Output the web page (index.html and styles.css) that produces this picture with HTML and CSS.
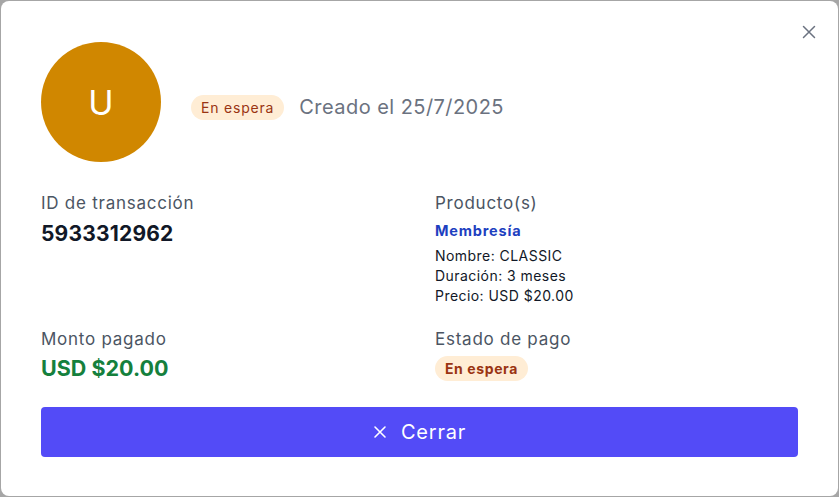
FILE: index.html
```html
<!DOCTYPE html>
<html lang="es">
<head>
<meta charset="utf-8">
<title>Transacción</title>
<link rel="stylesheet" href="styles.css">
</head>
<body>
<div class="modal">
  <button class="close" aria-label="Cerrar">
    <svg width="14" height="14" viewBox="0 0 14 14"><path d="M1.5 1.5L12.5 12.5M12.5 1.5L1.5 12.5" stroke="currentColor" stroke-width="1.5" stroke-linecap="round"/></svg>
  </button>
  <div class="header">
    <div class="avatar">U</div>
    <div class="meta">
      <span class="badge">En espera</span>
      <span class="created">Creado el 25/7/2025</span>
    </div>
  </div>
  <div class="grid">
    <div class="field">
      <div class="label">ID de transacción</div>
      <div class="value">5933312962</div>
    </div>
    <div class="field">
      <div class="label">Producto(s)</div>
      <div class="product-type">Membresía</div>
      <div class="detail">Nombre: CLASSIC</div>
      <div class="detail">Duración: 3 meses</div>
      <div class="detail">Precio: USD $20.00</div>
    </div>
    <div class="field">
      <div class="label">Monto pagado</div>
      <div class="value green">USD $20.00</div>
    </div>
    <div class="field">
      <div class="label">Estado de pago</div>
      <div class="badge bold">En espera</div>
    </div>
  </div>
  <button class="primary">
    <svg width="14" height="14" viewBox="0 0 14 14"><path d="M2 2L12 12M12 2L2 12" stroke="currentColor" stroke-width="1.6" stroke-linecap="round"/></svg>
    <span>Cerrar</span>
  </button>
</div>
</body>
</html>
```
FILE: styles.css
```css
* { box-sizing: border-box; }
html, body { margin: 0; padding: 0; }
body {
  width: 839px;
  height: 497px;
  background: #a6a6a6;
  padding: 1px;
  font-family: "Inter", "Noto Sans", sans-serif;
}
.modal {
  position: relative;
  background: #fff;
  width: 837px;
  height: 495px;
  border-radius: 8px;
  padding: 41px 40px 0 40px;
}
.close {
  position: absolute;
  top: 24px;
  right: 22px;
  background: none;
  border: 0;
  padding: 0;
  width: 14px;
  height: 14px;
  color: #6b7280;
  display: flex;
}
.header {
  display: flex;
  align-items: center;
}
.avatar {
  width: 120px;
  height: 120px;
  border-radius: 50%;
  background: #d08700;
  color: #fff;
  font-size: 34px;
  display: flex;
  align-items: center;
  justify-content: center;
  margin-right: 30px;
}
.meta {
  display: flex;
  align-items: center;
  margin-top: 10px;
}
.badge {
  display: inline-flex;
  align-items: center;
  height: 25px;
  padding: 0 10px;
  border-radius: 999px;
  background: #ffedd5;
  color: #9a3412;
  font-size: 14px;
  letter-spacing: 0.8px;
  margin-right: 15px;
}
.badge.bold {
  display: flex;
  width: max-content;
  font-weight: 700;
  margin-top: 4px;
  letter-spacing: 0.6px;
}
.created {
  font-size: 20px;
  letter-spacing: 0.45px;
  color: #6b7280;
}
.grid {
  display: grid;
  grid-template-columns: 1fr 1fr;
  column-gap: 31px;
  row-gap: 20px;
  margin-top: 28px;
}
.label {
  font-size: 17px;
  line-height: 26px;
  letter-spacing: 0.75px;
  color: #4b5563;
}
.value {
  margin-top: 2px;
  font-size: 21px;
  line-height: 32px;
  font-weight: 700;
  letter-spacing: 0.2px;
  color: #111827;
}
.value.green { color: #15803d; letter-spacing: 0; font-size: 21.5px; margin-top: 0; }
.product-type {
  margin-top: 4px;
  font-size: 14.5px;
  line-height: 22px;
  font-weight: 700;
  letter-spacing: 0.8px;
  color: #1d40c0;
  margin-bottom: 4px;
}
.detail {
  font-size: 14px;
  line-height: 20px;
  letter-spacing: 0.45px;
  color: #111827;
}
.primary {
  margin-top: 23px;
  width: 100%;
  height: 50px;
  border: 0;
  border-radius: 4px;
  background: #534bf7;
  color: #fff;
  font-family: inherit;
  font-size: 20px;
  letter-spacing: 0.8px;
  display: flex;
  align-items: center;
  justify-content: center;
  gap: 14px;
}
```
